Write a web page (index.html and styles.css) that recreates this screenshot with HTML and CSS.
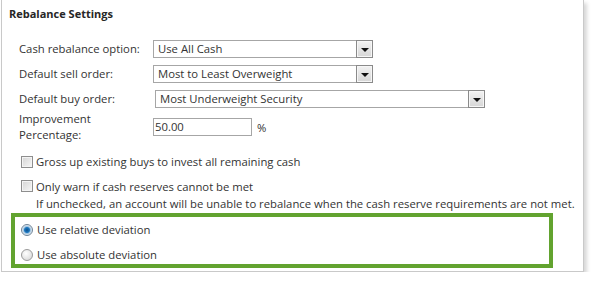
FILE: index.html
```html
<!DOCTYPE html>
<html lang="en">
<head>
    <meta charset="UTF-8">
    <meta name="viewport" content="width=device-width, initial-scale=1.0">
    <title>Rebalance Settings</title>
    <link rel="stylesheet" href="styles.css">
</head>
<body>
    <div class="panel">
        <div class="title">Rebalance Settings</div>

        <div class="form">
            <div class="row">
                <label class="label">Cash rebalance option:</label>
                <div class="select select-short">
                    <span class="value">Use All Cash</span>
                    <span class="drop"><span class="arrow"></span></span>
                </div>
            </div>
            <div class="row">
                <label class="label">Default sell order:</label>
                <div class="select select-short">
                    <span class="value">Most to Least Overweight</span>
                    <span class="drop"><span class="arrow"></span></span>
                </div>
            </div>
            <div class="row">
                <label class="label">Default buy order:</label>
                <div class="select select-long">
                    <span class="value">Most Underweight Security</span>
                    <span class="drop"><span class="arrow"></span></span>
                </div>
            </div>
            <div class="row row-tall">
                <label class="label">Improvement<br>Percentage:</label>
                <div class="text-input">50.00</div>
                <span class="unit">%</span>
            </div>
        </div>

        <div class="checks">
            <div class="check">
                <span class="box"></span>
                <span>Gross up existing buys to invest all remaining cash</span>
            </div>
            <div class="check check-second">
                <span class="box"></span>
                <span>Only warn if cash reserves cannot be met<br>If unchecked, an account will be unable to rebalance when the cash reserve requirements are not met.</span>
            </div>
        </div>

        <div class="highlight">
            <div class="radio-row">
                <span class="radio radio-on"></span>
                <span>Use relative deviation</span>
            </div>
            <div class="radio-row">
                <span class="radio"></span>
                <span>Use absolute deviation</span>
            </div>
        </div>
    </div>
</body>
</html>
```

FILE: styles.css
```css
body {
    margin: 0;
    background-color: #ffffff;
    color: #333333;
    font-family: 'Open Sans', 'Noto Sans', sans-serif;
    font-size: 11.3px;
}
.panel {
    margin-left: 1px;
    width: 581px;
    border: 1px solid #c9c9c9;
    border-top: none;
    padding-bottom: 3px;
    box-shadow: 3px 3px 4px rgba(0, 0, 0, 0.16);
}
.title {
    padding: 5px 0 0 7px;
    line-height: 18px;
    font-size: 11px;
    font-weight: bold;
    color: #262626;
}
.form {
    margin-top: 13px;
    padding-left: 17px;
}
.row {
    display: flex;
    align-items: center;
    height: 25px;
}
.row-tall {
    height: 32px;
}
.label {
    width: 134px;
    flex: none;
    line-height: 16px;
}
.select {
    display: flex;
    align-items: center;
    justify-content: space-between;
    box-sizing: border-box;
    height: 18px;
    border: 1px solid #a6a6a6;
    background-color: #ffffff;
}
.select-short {
    width: 220px;
}
.select-long {
    width: 330px;
    margin-left: 2px;
}
.value {
    padding-left: 4px;
    line-height: 16px;
}
.drop {
    display: flex;
    align-items: center;
    justify-content: center;
    box-sizing: border-box;
    width: 17px;
    height: 18px;
    margin-right: -1px;
    border: 1px solid #8a8a8a;
    box-shadow: inset 0 0 0 1px #f6f6f6;
    background: linear-gradient(#f2f2f2, #d6d6d6);
}
.arrow {
    width: 0;
    height: 0;
    margin-top: 2px;
    border-left: 4px solid transparent;
    border-right: 4px solid transparent;
    border-top: 4px solid #111111;
}
.text-input {
    box-sizing: border-box;
    width: 99px;
    height: 18px;
    padding-left: 1px;
    line-height: 16px;
    border: 1px solid #a6a6a6;
}
.unit {
    margin-left: 5px;
}
.checks {
    margin-top: 10px;
    padding-left: 19px;
}
.check {
    display: flex;
    align-items: flex-start;
    line-height: 18px;
}
.check-second {
    margin-top: 7px;
    line-height: 17px;
}
.box {
    flex: none;
    box-sizing: border-box;
    width: 12px;
    height: 12px;
    margin: 3px 3px 0 0;
    border: 1px solid #8e8e8e;
    box-shadow: inset 0 0 0 1px #f4f4f4;
    background: linear-gradient(135deg, #d4d4d4, #f7f7f7);
}
.check-second .box {
    margin-top: 2px;
}
.highlight {
    margin: 1px 0 0 9px;
    width: 542px;
    box-sizing: border-box;
    border: 4px solid #62a32f;
    padding: 4px 0 1px 6px;
    display: flex;
    flex-direction: column;
    gap: 8px;
}
.radio-row {
    display: flex;
    align-items: center;
    line-height: 17px;
}
.radio {
    flex: none;
    box-sizing: border-box;
    width: 12px;
    height: 12px;
    margin-right: 4px;
    border-radius: 50%;
    border: 1px solid #9a9a9a;
    background: radial-gradient(circle at 40% 35%, #ffffff, #d2d2d2);
}
.radio-on {
    border-color: #6e8396;
    background: radial-gradient(circle, #0c4f8a 0, #1d78c0 2.5px, #9fc3e0 3.5px, #e8eef4 5px);
}
```
